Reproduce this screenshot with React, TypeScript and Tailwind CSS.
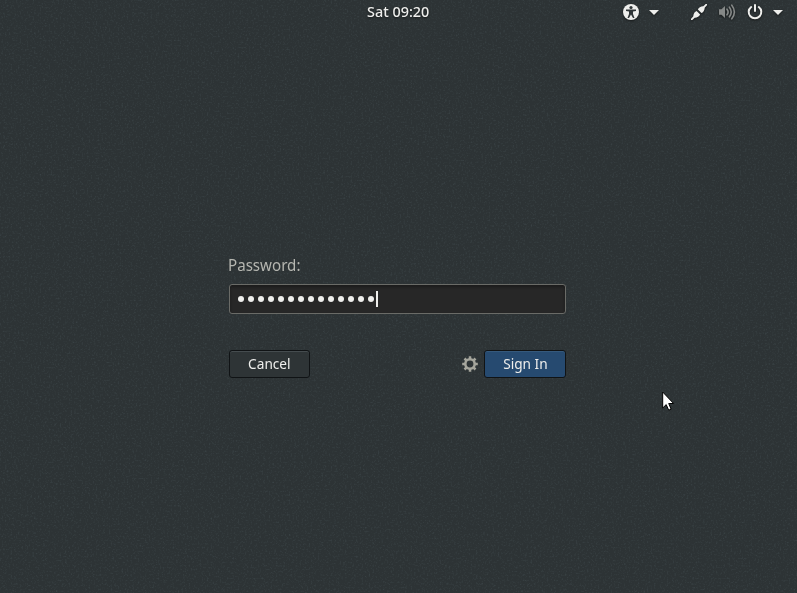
import React from "react";

const Caret = ({ className = "" }: { className?: string }) => (
  <svg className={`h-[5px] w-[10px] ${className}`} viewBox="0 0 10 5" fill="#eeeeec">
    <path d="M0 0H10L5 5Z" />
  </svg>
);

function Texture() {
  return (
    <svg className="pointer-events-none absolute inset-0 h-full w-full" aria-hidden="true">
      <filter id="grain" x="0" y="0" width="100%" height="100%" colorInterpolationFilters="sRGB">
        <feTurbulence type="fractalNoise" baseFrequency="0.55" numOctaves="2" seed="4" />
        <feColorMatrix values="0 0 0 0 0.55  0 0 0 0 0.66  0 0 0 0 0.7  0.9 0 0 0 -0.45" />
      </filter>
      <rect width="100%" height="100%" filter="url(#grain)" opacity="0.35" />
    </svg>
  );
}

function TopBar() {
  return (
    <header className="relative flex h-6 items-center pl-[367px] pr-[14px] [filter:drop-shadow(0_1px_1px_#0008)]">
      <div className="w-[256px] whitespace-nowrap pb-[2px] text-[15px] font-medium leading-[22px]">
        <span className="inline-block origin-left scale-x-[0.96]">Sat 09:20</span>
      </div>
      <svg className="h-4 w-4" viewBox="0 0 16 16">
        <circle cx="8" cy="8" r="8" fill="#eeeeec" />
        <circle cx="8" cy="3.5" r="1.6" fill="#2e3436" />
        <path d="M3 5.5H13V7L10 7.6V10L11.5 14H10L8 10.5L6 14H4.5L6 10V7.6L3 7Z" fill="#2e3436" />
      </svg>
      <Caret className="ml-[10px]" />
      <svg className="ml-8 h-4 w-4" viewBox="0 0 16 16">
        <path d="M0.7 15.3L4 12M15.3 0.7L12 4" stroke="#eeeeec" strokeWidth="1.8" strokeLinecap="round" />
        <path d="M2.3 12.2C2.3 9.5 4 7.4 5.6 6.9L9.1 10.4C8.4 12 6.3 13.7 3.8 13.7ZM6.9 5.6C7.6 4 9.7 2.3 12.2 2.3L13.7 3.8C13.7 6.4 12 8.6 10.4 9.1Z" fill="#eeeeec" />
      </svg>
      <svg className="ml-3 h-4 w-[17px]" viewBox="0 0 17 16">
        <path d="M0 5.2H2.5L6 2V14L2.5 10.8H0Z" fill="#858887" />
        <path d="M8 5.2Q10.2 8 8 10.8M10.4 3.2Q14 8 10.4 12.8M12.8 1.2Q18 8 12.8 14.8" fill="none" stroke="#858887" strokeWidth="1.6" strokeLinecap="round" />
      </svg>
      <svg className="ml-[11px] h-4 w-4" viewBox="0 0 16 16" fill="none" stroke="#eeeeec" strokeWidth="2" strokeLinecap="round">
        <path d="M8 1V7M4.2 3A6.3 6.3 0 1 0 11.8 3" />
      </svg>
      <Caret className="ml-auto" />
    </header>
  );
}

function Gear() {
  return (
    <svg className="mr-[6px] h-4 w-4" viewBox="0 0 16 16" fill="none" stroke="#a5a59c">
      <circle cx="8" cy="8" r="4.7" strokeWidth="2.6" />
      <path d="M8 0.2V3M8 13V15.8M0.2 8H3M13 8H15.8M2.5 2.5L4.5 4.5M11.5 11.5L13.5 13.5M2.5 13.5L4.5 11.5M11.5 4.5L13.5 2.5" strokeWidth="2.5" />
    </svg>
  );
}

export default function App() {
  return (
    <div className="relative h-[593px] w-[797px] overflow-hidden bg-[#2d3335] font-['Noto_Sans',sans-serif] text-[#eeeeec]">
      <Texture />
      <TopBar />
      <main className="relative ml-[229px] mt-[230px] w-[337px]">
        <label className="-ml-px block h-[22px] text-[16px] leading-[22px] text-[#b5b6b0]">
          <span className="inline-block origin-left scale-x-[0.945]">Password:</span>
        </label>
        <div className="mt-2 flex h-[30px] items-center rounded-[3px] border border-[#6a6b67] bg-[#272727] pl-2 shadow-[inset_0_2px_3px_#1b1b1b]">
          <div className="flex gap-1">
            {Array.from({ length: 14 }, (_, i) => (
              <span key={i} className="h-[6px] w-[6px] rounded-full bg-[#eeeeec]" />
            ))}
          </div>
          <span className="ml-[2px] h-4 w-[2px] bg-[#eeeeec]" />
        </div>
        <div className="mt-9 flex items-center">
          <button className="h-7 w-[81px] rounded-[3px] border border-[#101315] bg-[#2e3436] pb-[2px] text-[15px] leading-[24px] shadow-[inset_0_1px_0_#454c4f]">
            <span className="inline-block scale-x-[0.91]">Cancel</span>
          </button>
          <div className="ml-auto flex items-center">
            <Gear />
            <button className="h-7 w-[82px] rounded-[3px] border border-[#101315] bg-[#264a70] pb-[2px] text-[15px] leading-[24px] shadow-[inset_0_1px_0_#35597c]">
              <span className="inline-block scale-x-[0.91]">Sign In</span>
            </button>
          </div>
        </div>
      </main>
      <svg className="absolute left-[662px] top-[391px] h-5 w-3" viewBox="0 0 12 20">
        <path d="M0.7 1V17L4.2 13.6L6.7 19.2L9.1 18.1L6.7 12.5H11.6Z" fill="#fff" stroke="#000" />
      </svg>
    </div>
  );
}
